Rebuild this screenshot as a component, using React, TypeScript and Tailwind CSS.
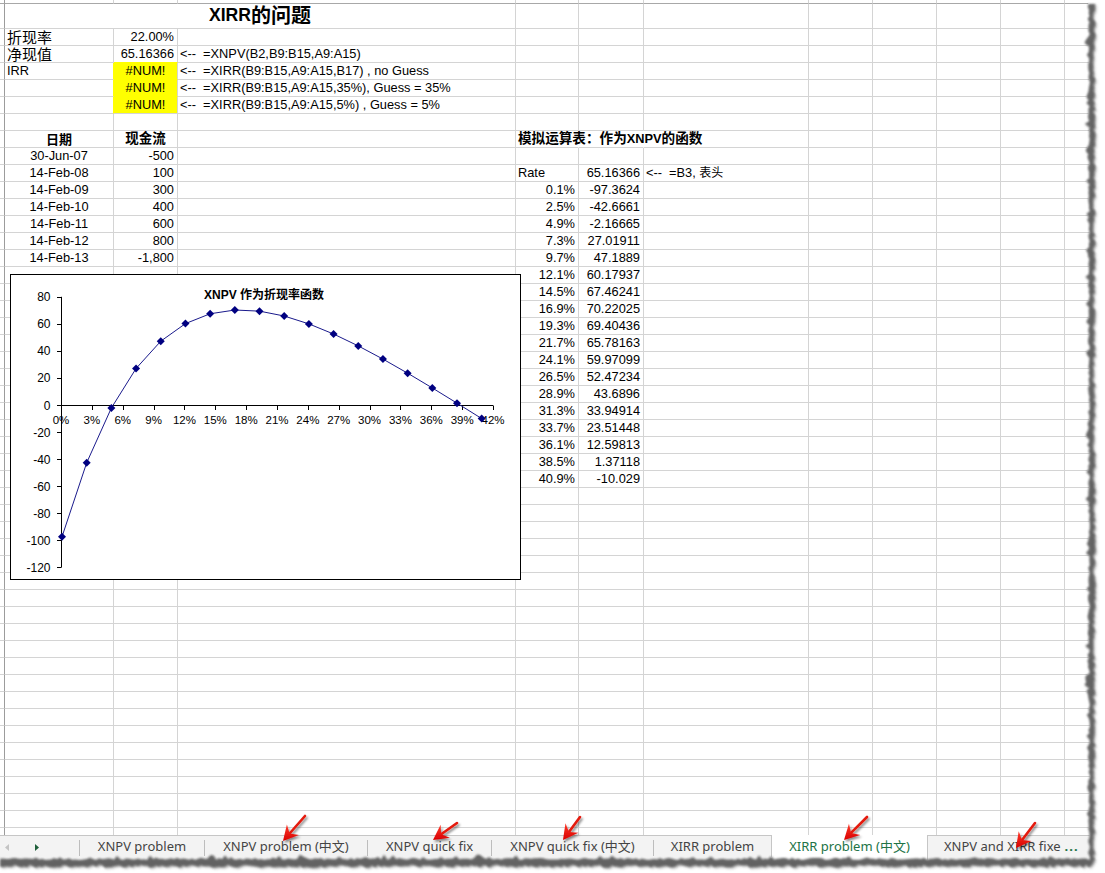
import React from 'react'

type Align = 'l' | 'r' | 'c'
interface Cell { t?: React.ReactNode; a?: Align; b?: boolean; cls?: string }

const COLS = ['w-[5px]', 'w-[109px]', 'w-[64px]', 'w-[338px]', 'w-[63px]', 'w-[65px]', 'w-[165px]', 'w-[64px]', 'w-[64px]', 'w-[64px]', 'w-[64px]', 'w-[80px]']
const AL: Record<Align, string> = { l: 'justify-start pl-[2px]', r: 'justify-end pr-[3px]', c: 'justify-center' }

const RATES = [0.1, 2.5, 4.9, 7.3, 9.7, 12.1, 14.5, 16.9, 19.3, 21.7, 24.1, 26.5, 28.9, 31.3, 33.7, 36.1, 38.5, 40.9]
const VALS = ['-97.3624', '-42.6661', '-2.16665', '27.01911', '47.1889', '60.17937', '67.46241', '70.22025', '69.40436', '65.78163', '59.97099', '52.47234', '43.6896', '33.94914', '23.51448', '12.59813', '1.37118', '-10.029']
const DATES = ['30-Jun-07', '14-Feb-08', '14-Feb-09', '14-Feb-10', '14-Feb-11', '14-Feb-12', '14-Feb-13']
const FLOWS = ['-500', '100', '300', '400', '600', '800', '-1,800']

const grid: Record<number, Record<number, Cell>> = {}
function set(r: number, c: number, cell: Cell) { (grid[r] ??= {})[c] = cell }

set(2, 1, { t: <span className="text-[15px]">折现率</span> })
set(2, 2, { t: '22.00%', a: 'r' })
set(3, 1, { t: <span className="text-[15px]">净现值</span> })
set(3, 2, { t: '65.16366', a: 'r', cls: 'border-b-[#ffff00]' })
set(3, 3, { t: '<--  =XNPV(B2,B9:B15,A9:A15)' })
set(4, 1, { t: 'IRR', cls: 'border-r-[#ffff00]' })
set(4, 2, { t: '#NUM!', a: 'c', cls: 'bg-[#ffff00] border-b-[#ffff00]' })
set(4, 3, { t: '<--  =XIRR(B9:B15,A9:A15,B17) , no Guess' })
set(5, 1, { cls: 'border-r-[#ffff00]' })
set(5, 2, { t: '#NUM!', a: 'c', cls: 'bg-[#ffff00] border-b-[#ffff00]' })
set(5, 3, { t: '<--  =XIRR(B9:B15,A9:A15,35%), Guess = 35%' })
set(6, 1, { cls: 'border-r-[#ffff00]' })
set(6, 2, { t: '#NUM!', a: 'c', cls: 'bg-[#ffff00]' })
set(6, 3, { t: '<--  =XIRR(B9:B15,A9:A15,5%) , Guess = 5%' })
set(8, 1, { t: <span className="text-[13px]">日期</span>, a: 'c', b: true })
set(8, 2, { t: <span className="text-[13.5px]">现金流</span>, a: 'c', b: true })
set(8, 4, { t: <><span className="text-[13.6px]">模拟运算表：作为</span>XNPV<span className="text-[13.6px]">的函数</span></>, b: true, cls: 'border-r-transparent' })
set(8, 5, { cls: 'border-r-transparent' })
DATES.forEach((d, i) => {
  set(9 + i, 1, { t: d, a: 'c' })
  set(9 + i, 2, { t: FLOWS[i], a: 'r' })
})
set(10, 4, { t: 'Rate' })
set(10, 5, { t: '65.16366', a: 'r' })
set(10, 6, { t: <>{'<--  =B3, '}<span className="text-[12px]">表头</span></> })
RATES.forEach((r, i) => {
  set(11 + i, 4, { t: r.toFixed(1) + '%', a: 'r' })
  set(11 + i, 5, { t: VALS[i], a: 'r' })
})

const BASE = 'shrink-0 h-full border-b border-r border-[#d4d4d4] flex items-center whitespace-pre overflow-visible'

function Row({ r }: { r: number }) {
  const cells = grid[r] ?? {}
  return (
    <div className="flex h-[17px]">
      {COLS.map((w, ci) => {
        if (ci === 0) return <div key={ci} className={`${w} shrink-0 h-full border-b border-r border-[#d4d4d4] border-r-[#9c9c9c]`} />
        const c = cells[ci]
        return (
          <div key={ci} className={`${w} ${BASE} ${AL[c?.a ?? 'l']} ${c?.b ? 'font-bold' : ''} ${c?.cls ?? ''}`}>
            {c?.t}
          </div>
        )
      })}
    </div>
  )
}

// chart geometry, page coords minus chart inner origin
const OX = 11, OY = 275
const X = (rate: number) => 61 + (rate / 42) * 432 - OX
const Y = (v: number) => 405 - v * 1.3525 - OY

function Chart() {
  const pts = RATES.map((r, i) => [X(r), Y(parseFloat(VALS[i]))])
  return (
    <div className="absolute left-[10px] top-[274px] w-[511px] h-[306px] border border-black bg-white">
      <svg width="509" height="304" className="block">
        <text x={253} y={24} textAnchor="middle" fontSize="12" fontWeight="bold">XNPV 作为折现率函数</text>
        <line x1={50.5} y1={Y(80)} x2={50.5} y2={Y(-120)} stroke="#000" />
        {[80, 60, 40, 20, 0, -20, -40, -60, -80, -100, -120].map(v => (
          <g key={v}>
            <line x1={46} y1={Math.round(Y(v)) + 0.5} x2={50.5} y2={Math.round(Y(v)) + 0.5} stroke="#000" />
            <text x={39.5} y={Y(v) + 4.5} textAnchor="end" fontSize="12">{v}</text>
          </g>
        ))}
        <line x1={50} y1={130.5} x2={X(42)} y2={130.5} stroke="#000" />
        {Array.from({ length: 15 }, (_, i) => i * 3).map(p => (
          <g key={p}>
            <line x1={Math.round(X(p)) + 0.5} y1={130.5} x2={Math.round(X(p)) + 0.5} y2={135} stroke="#000" />
            <text x={X(p)} y={149} textAnchor="middle" fontSize="11.5">{p}%</text>
          </g>
        ))}
        <polyline points={pts.map(p => p.join(',')).join(' ')} fill="none" stroke="#1a1a8c" strokeWidth="1" />
        {pts.map(([x, y], i) => (
          <polygon key={i} points={`${x},${y - 4} ${x + 4},${y} ${x},${y + 4} ${x - 4},${y}`} fill="#000080" />
        ))}
      </svg>
    </div>
  )
}

function rng(seed: number) {
  let s = seed
  return () => { s = (s * 16807) % 2147483647; return s / 2147483647 }
}

function TornEdge() {
  const r = rng(12345)
  const rightIn: number[][] = [], rightOut: number[][] = [], botIn: number[][] = [], botOut: number[][] = []
  for (let y = 4; y <= 860; y += 3) {
    rightIn.push([1089 + (r() - 0.5) * 2 - (r() < 0.18 ? r() * 4 : 0), y])
    rightOut.push([1094 + (r() - 0.5) * 3, y])
  }
  for (let x = 1089; x >= 0; x -= 3) botIn.push([x, 859 + (r() - 0.5) * 2 - (r() < 0.18 ? r() * 4 : 0)])
  for (let x = 0; x <= 1094; x += 3) botOut.push([x, 866 + (r() - 0.5) * 3])
  const j = (a: number[][]) => a.map(p => `${p[0].toFixed(1)},${p[1].toFixed(1)}`).join(' ')
  const white = `1105,0 1089,0 ${j(rightIn)} ${j(botIn)} 0,873 1105,873`
  const band = `${j(rightIn)} ${j(botIn)} ${j(botOut)} ${j([...rightOut].reverse())}`
  return (
    <svg width="1105" height="873" className="absolute left-0 top-0 pointer-events-none">
      <defs>
        <filter id="tb" x="-5%" y="-5%" width="110%" height="110%"><feGaussianBlur stdDeviation="0.8" /></filter>
        <filter id="tb2" x="-5%" y="-5%" width="110%" height="110%"><feGaussianBlur stdDeviation="1.8" /></filter>
      </defs>
      <polygon points={white} fill="#fff" />
      <polygon points={band} fill="#b0b0b0" filter="url(#tb2)" transform="translate(1.5,1.5)" />
      <polygon points={band} fill="#5a5a5a" opacity="0.9" filter="url(#tb)" />
    </svg>
  )
}

const ARROWS = [
  [305, 816, 283, 841],
  [457, 823, 433, 840],
  [580, 817, 563, 840],
  [867, 817, 844, 840],
  [1035, 823, 1016, 848],
]

function Arrows() {
  return (
    <svg width="1105" height="873" className="absolute left-0 top-0 pointer-events-none">
      <defs>
        <filter id="ash" x="-50%" y="-50%" width="200%" height="200%">
          <feDropShadow dx="1.5" dy="2" stdDeviation="1.2" floodColor="#000" floodOpacity="0.45" />
        </filter>
        <linearGradient id="ag" x1="0" y1="0" x2="0" y2="1">
          <stop offset="0" stopColor="#ff3a2a" />
          <stop offset="1" stopColor="#d80000" />
        </linearGradient>
      </defs>
      {ARROWS.map(([tx, ty, px, py], i) => {
        const len = Math.hypot(px - tx, py - ty)
        const ux = (px - tx) / len, uy = (py - ty) / len
        const nx = -uy, ny = ux
        const L = 15, W = 8
        const b1 = [px - ux * L + nx * W, py - uy * L + ny * W]
        const b2 = [px - ux * L - nx * W, py - uy * L - ny * W]
        const nt = [px - ux * (L - 5), py - uy * (L - 5)]
        return (
          <g key={i} filter="url(#ash)">
            <line x1={tx} y1={ty} x2={nt[0]} y2={nt[1]} stroke="#e41a10" strokeWidth="2.6" strokeLinecap="round" />
            <polygon points={`${px},${py} ${b1.join(',')} ${nt.join(',')} ${b2.join(',')}`} fill="url(#ag)" />
          </g>
        )
      })}
    </svg>
  )
}

function Sep() {
  return <div className="w-px h-[16px] mt-[4px] bg-[#bdbdbd] shrink-0" />
}

function Tab({ w, children }: { w: string; children: React.ReactNode }) {
  return <div className={`${w} shrink-0 flex justify-center pt-[1px] leading-[19px] whitespace-pre`}>{children}</div>
}

function TabBar() {
  return (
    <div className="flex items-start h-[38px] border-t border-[#c6c6c6] bg-[#f3f3f3] text-[13px] text-[#444] font-[Noto_Sans,Noto_Sans_CJK_SC,sans-serif]">
      <div className="w-[79px] shrink-0 h-[22px] flex items-center">
        <svg width="79" height="22">
          <polygon points="9,8 5,11.5 9,15" fill="#c4c4c4" />
          <polygon points="35,8 39,11.5 35,15" fill="#1f5f3a" />
        </svg>
      </div>
      <Sep />
      <Tab w="w-[124px]">XNPV problem</Tab>
      <Sep />
      <Tab w="w-[162px]">XNPV problem (中文)</Tab>
      <Sep />
      <Tab w="w-[123px]">XNPV quick fix</Tab>
      <Sep />
      <Tab w="w-[161px]">XNPV quick fix (中文)</Tab>
      <Sep />
      <Tab w="w-[117px]">XIRR problem</Tab>
      <div className="relative w-[157px] shrink-0 -mt-px h-[38px] bg-white border-x border-[#c6c6c6] flex justify-center pt-[2px] leading-[19px] text-[#217346]">
        <span className="relative whitespace-pre">
          XIRR problem (中文)
          <span className="absolute left-0 right-0 top-[27px] h-[3px] bg-[#217346]" />
        </span>
      </div>
      <div className="shrink-0 flex pl-[16px] pt-[1px] leading-[19px] whitespace-pre">
        <span>XNPV and XIRR fixe</span>
        <span className="ml-[4px] text-[#217346] font-bold tracking-[1px]">...</span>
      </div>
    </div>
  )
}

export default function App() {
  return (
    <div className="relative w-[1105px] h-[873px] overflow-hidden bg-white text-black font-[Liberation_Sans,Noto_Sans_CJK_SC,sans-serif]">
      <div className="relative h-[835px] overflow-hidden text-[12.8px] leading-none">
        {/* strip above row 1 */}
        <div className="flex h-[4px]">
          {COLS.map((w, i) => (
            <div key={i} className={`${w} shrink-0 h-full border-b border-r border-[#d4d4d4] border-b-[#a8a8a8] ${i === 0 ? 'border-r-[#9c9c9c]' : ''}`} />
          ))}
        </div>
        {/* row 1, A1:C1 merged */}
        <div className="flex h-[25px]">
          <div className="w-[5px] shrink-0 h-full border-b border-r border-[#d4d4d4] border-r-[#9c9c9c]" />
          <div className="w-[511px] shrink-0 h-full border-b border-r border-[#d4d4d4] flex items-center justify-center font-bold text-[17.6px]">
            XIRR<span className="text-[20px]">的问题</span>
          </div>
          {COLS.slice(4).map((w, i) => (
            <div key={i} className={`${w} shrink-0 h-full border-b border-r border-[#d4d4d4]`} />
          ))}
        </div>
        {Array.from({ length: 48 }, (_, i) => i + 2).map(r => <Row key={r} r={r} />)}
        <Chart />
      </div>
      <TabBar />
      <TornEdge />
      <Arrows />
    </div>
  )
}
